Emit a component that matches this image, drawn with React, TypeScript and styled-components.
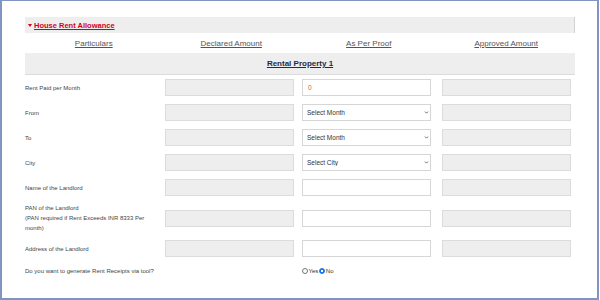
import styled, { createGlobalStyle } from "styled-components"
import { ChevronDown } from "lucide-react"

const GlobalStyle = createGlobalStyle`
  html, body {
    margin: 0;
    padding: 0;
    background: #ffffff;
  }
  body {
    font-family: "Liberation Sans", Arial, sans-serif;
  }
`

const Frame = styled.div`
  box-sizing: border-box;
  width: 599px;
  height: 300px;
  border: 2px solid #8095c1;
  border-top-width: 1px;
  padding: 16px 22px 0 23px;
  overflow: hidden;
`

const SectionBar = styled.div`
  height: 16px;
  background: #eeeeee;
  border-right: 1px solid #d2d2d2;
  display: flex;
  align-items: center;
  padding-left: 3px;
  gap: 2px;
`

const Caret = styled.span`
  width: 0;
  height: 0;
  border-left: 2px solid transparent;
  border-right: 2px solid transparent;
  border-top: 3px solid #d0021b;
`

const SectionTitle = styled.a`
  color: #d0021b;
  font-weight: 700;
  font-size: 7.5px;
  text-decoration: underline;
`

const HeaderRow = styled.div`
  display: grid;
  grid-template-columns: repeat(4, 1fr);
  height: 19px;
  align-items: center;
  border-top: 1px solid #ffffff;
`

const HeaderCell = styled.span`
  text-align: center;
  font-size: 8px;
  color: #555555;
  text-decoration: underline;
`

const PropertyBar = styled.div`
  height: 21px;
  background: #eeeeee;
  border-bottom: 1px solid #dcdcdc;
  display: flex;
  align-items: center;
  justify-content: center;
  font-size: 8px;
  font-weight: 700;
  color: #1e2b47;
  text-decoration: underline;
`

const Rows = styled.div`
  padding-top: 0;
`

const Row = styled.div<{ compact?: boolean }>`
  display: grid;
  grid-template-columns: repeat(4, 1fr);
  align-items: center;
  min-height: ${p => (p.compact ? "19px" : "25px")};
  padding: ${p => (p.compact ? "0" : "3px 0")};
  box-sizing: border-box;
`

const Label = styled.div`
  font-size: 6px;
  line-height: 10px;
  color: #444444;
`

const Cell = styled.div<{ shift?: number }>`
  padding-left: ${p => p.shift ?? 2}px;
  position: relative;
  line-height: 0;
`

const Field = styled.input<{ readOnlyLook?: boolean }>`
  display: block;
  box-sizing: border-box;
  width: 129px;
  height: 17px;
  margin: 0;
  border: 1px solid ${p => (p.readOnlyLook ? "#dcdcdc" : "#d6d6d6")};
  background: ${p => (p.readOnlyLook ? "#eeeeee" : "#ffffff")};
  font-family: "Liberation Sans", Arial, sans-serif;
  font-size: 6.5px;
  color: #b0704a;
  padding: 0 5px;
  outline: none;
`

const Select = styled.select`
  display: block;
  box-sizing: border-box;
  width: 129px;
  height: 17px;
  margin: 0;
  border: 1px solid #d6d6d6;
  border-radius: 0;
  background: #ffffff;
  font-family: "Liberation Sans", Arial, sans-serif;
  font-size: 6.5px;
  color: #333333;
  padding: 0 4px;
  appearance: none;
  outline: none;
`

const SelectArrow = styled(ChevronDown)`
  position: absolute;
  left: 124px;
  top: 6px;
  width: 5px;
  height: 5px;
  color: #333333;
  pointer-events: none;
`

const RadioGroup = styled.div`
  display: flex;
  align-items: center;
  padding-left: 2px;
  font-size: 6px;
  color: #333333;
`

const RadioOption = styled.label`
  display: flex;
  align-items: center;
  margin-right: 1px;
`

const Dot = styled.span<{ checked?: boolean }>`
  box-sizing: border-box;
  width: 6px;
  height: 6px;
  border-radius: 50%;
  border: 1px solid ${p => (p.checked ? "#1a73e8" : "#767676")};
  background: ${p => (p.checked ? "radial-gradient(circle, #ffffff 0 1px, #1a73e8 1.2px)" : "#ffffff")};
  margin-right: 0.5px;
`

type RowDef = {
  label: React.ReactNode
  proof: "input" | "month" | "city"
  value?: string
}

const rows: RowDef[] = [
  { label: "Rent Paid per Month", proof: "input", value: "0" },
  { label: "From", proof: "month" },
  { label: "To", proof: "month" },
  { label: "City", proof: "city" },
  { label: "Name of the Landlord", proof: "input" },
  {
    label: (
      <>
        PAN of the Landlord
        <br />
        (PAN required if Rent Exceeds INR 8333 Per
        <br />
        month)
      </>
    ),
    proof: "input",
  },
  { label: "Address of the Landlord", proof: "input" },
]

const App = () => {
  const renderProof = (row: RowDef) => {
    if (row.proof === "input") {
      return <Field defaultValue={row.value} />
    }
    return (
      <>
        <Select defaultValue="">
          <option value="">{row.proof === "month" ? "Select Month" : "Select City"}</option>
        </Select>
        <SelectArrow strokeWidth={3.5} />
      </>
    )
  }

  return (
    <>
      <GlobalStyle />
      <Frame>
        <SectionBar>
          <Caret />
          <SectionTitle>House Rent Allowance</SectionTitle>
        </SectionBar>
        <HeaderRow>
          <HeaderCell>Particulars</HeaderCell>
          <HeaderCell>Declared Amount</HeaderCell>
          <HeaderCell>As Per Proof</HeaderCell>
          <HeaderCell>Approved Amount</HeaderCell>
        </HeaderRow>
        <PropertyBar>Rental Property 1</PropertyBar>
        <Rows>
          {rows.map((row, index) => (
            <Row key={index}>
              <Label>{row.label}</Label>
              <Cell>
                <Field readOnlyLook disabled />
              </Cell>
              <Cell>{renderProof(row)}</Cell>
              <Cell shift={4}>
                <Field readOnlyLook disabled />
              </Cell>
            </Row>
          ))}
          <Row compact>
            <Label>Do you want to generate Rent Receipts via tool?</Label>
            <div />
            <RadioGroup>
              <RadioOption>
                <Dot />
                Yes
              </RadioOption>
              <RadioOption>
                <Dot checked />
                No
              </RadioOption>
            </RadioGroup>
          </Row>
        </Rows>
      </Frame>
    </>
  )
}

export default App
